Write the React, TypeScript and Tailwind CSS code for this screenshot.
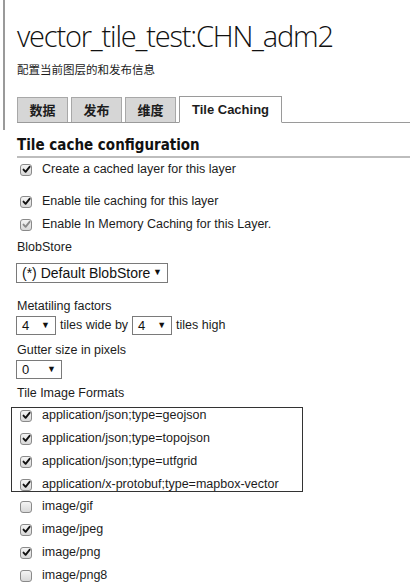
import React from 'react';

const Check = ({ on = true, faint = false }: { on?: boolean; faint?: boolean }) => (
  <span className="inline-flex items-center justify-center w-[12px] h-[12px] rounded-[3px] border border-[#8a8a8a] bg-gradient-to-b from-[#f4f4f4] to-[#d8d8d8] shrink-0">
    {on && (
      <svg width="9" height="9" viewBox="0 0 9 9">
        <path d="M1.5 4.6 L3.6 6.8 L7.6 1.8" fill="none" stroke={faint ? '#8a8a8a' : '#111'} strokeWidth="1.9" strokeLinecap="round" strokeLinejoin="round" />
      </svg>
    )}
  </span>
);

const Row = ({ label, on = true, faint = false }: { label: string; on?: boolean; faint?: boolean }) => (
  <div className="flex items-center h-[23px] pl-[20px] gap-[10px]">
    <Check on={on} faint={faint} />
    <span>{label}</span>
  </div>
);

const Select = ({ value, w }: { value: string; w: string }) => (
  <span className={`inline-flex items-center justify-between border border-[#7a7a7a] bg-white px-[5px] font-['Liberation_Sans',sans-serif] text-[#111] ${w}`}>
    <span>{value}</span>
    <span className="text-[9px]">▼</span>
  </span>
);

export default function App() {
  return (
    <div className="w-[410px] h-[586px] overflow-hidden bg-white text-[#1c1c1c] font-['Liberation_Sans',sans-serif] text-[12.5px]">
      <div className="border-l-[2px] border-[#9a9a9a] ml-[3px] pl-[12px] pt-[16px] h-[130px] flex flex-col">
        <h1 className="font-['Open_Sans',sans-serif] font-light text-[29px] leading-[40px] tracking-[-1.2px] text-[#111]">vector_tile_test:CHN_adm2</h1>
        <p className="mt-[5px] font-['Noto_Sans_CJK_SC',sans-serif] text-[11.5px] leading-[16px]">配置当前图层的和发布信息</p>
        <div className="mt-[19px] flex items-end border-b border-[#9a9a9a] -mr-[20px]">
          {['数据', '发布', '维度'].map(t => (
            <span key={t} className="h-[25px] w-[51px] mr-[3px] flex items-center justify-center bg-[#d6d6d6] border border-[#a8a8a8] border-b-0 font-['Noto_Sans_CJK_SC',sans-serif] font-bold text-[13px]">{t}</span>
          ))}
          <span className="h-[27px] w-[103px] -mb-px flex items-center justify-center bg-white border border-[#9a9a9a] border-b-white font-bold text-[13px]">Tile Caching</span>
        </div>
      </div>
      <div className="pl-[17px]">
        <h2 className="mt-[5px] font-['DejaVu_Sans_Condensed','DejaVu_Sans',sans-serif] font-bold text-[15px] leading-[20px] text-[#111]">Tile cache configuration</h2>
        <div className="h-[2px] bg-[#bdbdbd] mt-[1px]" />
      </div>
      <div>
        <Row label="Create a cached layer for this layer" />
        <div className="h-[9px]" />
        <Row label="Enable tile caching for this layer" />
        <Row label="Enable In Memory Caching for this Layer." faint />
        <div className="pl-[17px] h-[22px] flex items-center">BlobStore</div>
        <div className="pl-[16px] mt-[5px] flex">
          <Select value="(*) Default BlobStore" w="w-[152px] h-[20px] text-[14px]" />
        </div>
        <div className="pl-[17px] mt-[13px] h-[20px] flex items-center">Metatiling factors</div>
        <div className="pl-[16px] flex items-center gap-[4px]">
          <Select value="4" w="w-[40px] h-[19px] text-[13px]" />
          <span>tiles wide by</span>
          <Select value="4" w="w-[40px] h-[19px] text-[13px]" />
          <span>tiles high</span>
        </div>
        <div className="pl-[17px] mt-[5px] h-[20px] flex items-center">Gutter size in pixels</div>
        <div className="pl-[16px] flex">
          <Select value="0" w="w-[46px] h-[19px] text-[13px]" />
        </div>
        <div className="pl-[17px] mt-[4px] h-[20px] flex items-center">Tile Image Formats</div>
        <div className="ml-[11px] mt-[4px] w-[292px] h-[85px] border border-[#333]">
          <div className="-ml-[12px] -mt-[4px]">
            <Row label="application/json;type=geojson" />
            <Row label="application/json;type=topojson" />
            <Row label="application/json;type=utfgrid" />
            <Row label="application/x-protobuf;type=mapbox-vector" />
          </div>
        </div>
        <div className="mt-[3px]">
          <Row label="image/gif" on={false} />
          <Row label="image/jpeg" />
          <Row label="image/png" />
          <Row label="image/png8" on={false} />
        </div>
      </div>
    </div>
  );
}
